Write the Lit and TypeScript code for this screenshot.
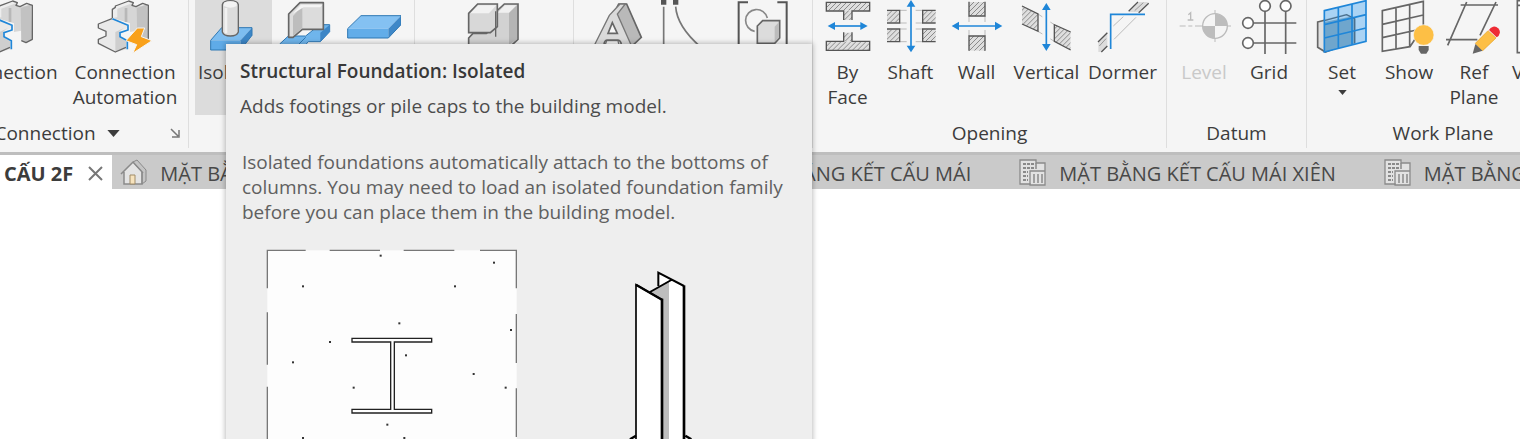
import { LitElement, html, svg, css, nothing } from "lit";
import type { SVGTemplateResult, TemplateResult } from "lit";
import { customElement, property } from "lit/decorators.js";
import { classMap } from "lit/directives/class-map.js";
import { styleMap } from "lit/directives/style-map.js";

/* ---------- icon artwork, each drawn on a 168-unit square ---------- */

const beamJoint = svg`
  <path d="M337 54V28L346 22V18L388 3L400 8V18L410 20L445 12V118L428 128L412 122V92L390 96V70Z" fill="#d6d6d6"/>
  <path d="M346 18L388 3L400 8L352 26V52L337 54V28Z" fill="#ededed"/>
  <path d="M410 24L440 14L445 118L428 128L412 122Z" fill="#c2c2c2"/>
  <path d="M378 24V66" stroke="#b8b8b8" stroke-width="8"/>
  <path d="M337 54V28L346 22V18L386 3L400 8L396 16L408 20L428 10L445 16V118L426 128L412 122" fill="none" stroke="#666" stroke-width="4" stroke-linejoin="round"/>
  <path d="M295 72L340 54L384 76V84L362 92L360 110L384 122V148L346 156L295 130V116L318 106V92L295 84Z" fill="#e9e9e9"/>
  <path d="M346 96V156L378 142V124L358 112V94L372 84Z" fill="#cfcfcf"/>
  <path d="M336 56L295 72V84L318 94V108L295 118V130L346 156L378 142" fill="none" stroke="#666" stroke-width="4" stroke-linejoin="round"/>
  <path d="M337 56L384 76V90L360 98V110L382 122V148" fill="none" stroke="#1f86d8" stroke-width="5"/>`;

const hatch = (x: number, y: number, w: number, h: number): SVGTemplateResult => {
  const id = `h${x}-${y}`;
  const lines: SVGTemplateResult[] = [];
  for (let i = -h; i < w; i += 15) {
    lines.push(svg`<path d=${`M${x + i} ${y + h}l${h} ${-h}`} stroke="#8a8a8a" stroke-width="3"/>`);
  }
  return svg`
    <clipPath id=${id}><rect x=${x} y=${y} width=${w} height=${h}/></clipPath>
    <rect x=${x} y=${y} width=${w} height=${h} fill="#dedede"/>
    <g clip-path=${`url(#${id})`}>${lines}</g>`;
};

const icons: Record<string, { box: string; art: SVGTemplateResult }> = {
  connection: { box: "285 0 168 168", art: beamJoint },
  automation: {
    box: "291 0 168 168",
    art: svg`${beamJoint}
      <path d="M412 84H434L424 110L456 122L398 160L410 134L378 122Z" fill="#f9a11b" stroke="#f5f5f5" stroke-width="3"/>`,
  },
  isolated: {
    box: "43 0 168 168",
    art: svg`
      <path d="M60 121L93 83H184L150 121Z" fill="#7dbdf0"/>
      <path d="M60 121H150V150H60Z" fill="#5fabe8"/>
      <path d="M150 121L184 83V106L150 150Z" fill="#3d86c6"/>
      <path d="M60 121L93 83H184V106L150 150H60Z" fill="none" stroke="#2f78b4" stroke-width="3"/>
      <path d="M95 14Q97 2 119 2Q141 2 143 14V96Q139 108 119 108Q99 108 95 96Z" fill="#dcdcdc" stroke="#666" stroke-width="4"/>
      <path d="M100 18Q119 28 138 18V8Q119 0 100 8Z" fill="#f3f3f3"/>
      <path d="M106 24V100" stroke="#f1f1f1" stroke-width="8"/>`,
  },
  wallFooting: {
    box: "258 0 168 168",
    art: svg`
      <path d="M266 132L292 108H344L386 74H416V95L388 125H352L330 150H266Z" fill="#6fb5ec" stroke="#2f78b4" stroke-width="3"/>
      <path d="M388 98L416 74V95L388 125Z" fill="#3d86c6"/>
      <path d="M266 134H322L344 112" fill="none" stroke="#2f78b4" stroke-width="3"/>
      <path d="M293 42L327 8H397V88H334L306 112H293Z" fill="#dcdcdc" stroke="#666" stroke-width="5" stroke-linejoin="round"/>
      <path d="M306 48L334 18V84L306 108Z" fill="#bdbdbd"/>
      <path d="M304 42L330 14H394L388 22H338Z" fill="#f4f4f4"/>`,
  },
  slab: {
    box: "462 0 168 168",
    art: svg`
      <path d="M470 86L510 47H630L592 86Z" fill="#84c1f2"/>
      <path d="M470 86H592V114H470Z" fill="#62ade9"/>
      <path d="M592 86L630 47V74L592 114Z" fill="#3f88c8"/>
      <path d="M470 86L510 47H630V74L592 114H470Z" fill="none" stroke="#2f78b4" stroke-width="3"/>`,
  },
  component: {
    box: "103 0 168 168",
    art: svg`
      <path d="M111 160V114L124 100H164L192 76V36L218 12H259V118L242 134V160Z" fill="#d2d2d2" stroke="#666" stroke-width="5"/>
      <path d="M232 38L256 16V118L232 134Z" fill="#b5b5b5"/>
      <path d="M198 38L220 16H254L232 38Z" fill="#f0f0f0"/>
      <path d="M111 40L138 12H197V80L176 98H111Z" fill="#d8d8d8" stroke="#666" stroke-width="5"/>
      <path d="M116 40L140 16H194L172 40Z" fill="#f2f2f2"/>
      <path d="M192 34V110" stroke="#666" stroke-width="4"/>`,
  },
  modelText: {
    box: "478 0 168 168",
    art: svg`
      <path d="M570 12H594L638 112L606 142L556 40Z" fill="#b9b9b9" stroke="#666" stroke-width="5"/>
      <path d="M490 150L542 46L574 12H590L566 42L614 150H574L568 122H534L524 150Z" fill="#dadada" stroke="#777" stroke-width="4"/>
      <path d="M551 68L566 100H538Z" fill="#f7f7f7" stroke="#666" stroke-width="5"/>
      <path d="M526 132Q528 120 536 120H568Q576 122 578 132" fill="none" stroke="#666" stroke-width="5"/>`,
  },
  modelLine: {
    box: "672 0 168 168",
    art: svg`
      <path d="M690 0h16v14h-16zM726 0h16v14h-16z" fill="#555"/>
      <path d="M698 20V160M734 20Q738 80 810 142" fill="none" stroke="#777" stroke-width="5"/>`,
  },
  modelGroup: {
    box: "906 0 168 168",
    art: svg`
      <path d="M954 7H926V160M1042 7H1070V160" fill="none" stroke="#555" stroke-width="6"/>
      <path d="M974 94A33 33 0 1 1 1012 54" fill="none" stroke="#888" stroke-width="5"/>
      <path d="M982 78L998 62H1049V114L1034 130H982Z" fill="#dcdcdc" stroke="#666" stroke-width="5"/>
      <path d="M1034 80L1047 66V112L1034 126Z" fill="#bcbcbc"/>`,
  },
  byFace: {
    box: "30 0 168 168",
    art: svg`
      ${hatch(49, 8, 129, 24)}${hatch(101, 32, 25, 28)}${hatch(49, 124, 129, 26)}${hatch(101, 98, 25, 26)}
      <path d="M101 60V33H49V7H179V33H126V60M101 97V124H49V151H179V124H126V97" fill="none" stroke="#555" stroke-width="4"/>
      <path d="M66 78H160" stroke="#1f86d8" stroke-width="5"/>
      <path d="M53 78l22-12v24zM173 78l-22-12v24z" fill="#1f86d8"/>`,
  },
  shaft: {
    box: "219 0 168 168",
    art: svg`
      ${hatch(231, 32, 38, 36)}${hatch(338, 32, 39, 36)}${hatch(231, 88, 38, 36)}${hatch(338, 88, 39, 36)}
      <path d="M270 31H338M270 69H338M270 87H338M270 125H338" stroke="#bbb" stroke-width="3"/>
      <path d="M231 31H269V69H231M377 31H338V69H377M231 87H269V125H231M377 87H338V125H377" fill="none" stroke="#555" stroke-width="4"/>
      <path d="M290 20h27v116h-27z" fill="#f5f5f5"/>
      <path d="M303 14V142" stroke="#1f86d8" stroke-width="5"/>
      <path d="M303 0l-13 20h26zM303 157l-13-20h26z" fill="#1f86d8"/>`,
  },
  wall: {
    box: "420 0 168 168",
    art: svg`
      ${hatch(480, 6, 48, 42)}${hatch(480, 108, 48, 44)}
      <path d="M480 48V108M528 48V108" stroke="#bbb" stroke-width="3"/>
      <path d="M480 5V48H528V5M480 152V108H528V152" fill="none" stroke="#555" stroke-width="4"/>
      <path d="M445 66h118v24h-118z" fill="#f5f5f5"/>
      <path d="M442 78H566" stroke="#1f86d8" stroke-width="5"/>
      <path d="M428 78l22-13v26zM580 78l-22-13v26z" fill="#1f86d8"/>`,
  },
  vertical: {
    box: "627 0 168 168",
    art: svg`
      <clipPath id="v1"><path d="M636 18L684 42V94L636 72Z"/></clipPath>
      <clipPath id="v2"><path d="M733 74L782 96V150L733 124Z"/></clipPath>
      <g clip-path="url(#v1)">${hatch(636, 16, 50, 80)}</g>
      <g clip-path="url(#v2)">${hatch(733, 72, 50, 80)}</g>
      <path d="M684 42L733 74M684 94L733 124" stroke="#bbb" stroke-width="3"/>
      <path d="M636 18L684 42V94L636 72M782 96L733 74V124L782 150" fill="none" stroke="#555" stroke-width="4"/>
      <path d="M697 30h24v100h-24z" fill="#f5f5f5"/>
      <path d="M709 24V138" stroke="#1f86d8" stroke-width="5"/>
      <path d="M709 9l-13 21h26zM709 153l-13-21h26z" fill="#1f86d8"/>`,
  },
  dormer: {
    box: "855 0 168 168",
    art: svg`
      <path d="M958 36L988 6H1015L985 36ZM865 126L892 98V138L873 156H865Z" fill="#dcdcdc"/>
      <path d="M910 78L940 50M912 118L978 52" stroke="#bbb" stroke-width="3"/>
      <path d="M956 34L984 6M986 38L1016 10M864 126L892 98M874 156L892 138" stroke="#555" stroke-width="4"/>
      <path d="M974 32L1000 8M868 138L888 116" stroke="#999" stroke-width="3"/>
      <path d="M902 147V43H1005" fill="none" stroke="#1f86d8" stroke-width="5"/>`,
  },
  level: {
    box: "75 0 168 168",
    art: svg`
      <path d="M86 78H104M112 78H124M132 78H240M192 30V126" stroke="#bbb" stroke-width="3"/>
      <path d="M112 44L119 38V60M110 60H127" fill="none" stroke="#bbb" stroke-width="4"/>
      <circle cx="192" cy="78" r="37" fill="#f5f5f5" stroke="#bbb" stroke-width="4"/>
      <path d="M192 78V41A37 37 0 0 1 229 78ZM192 78V115A37 37 0 0 1 155 78Z" fill="#bdbdbd"/>`,
  },
  grid: {
    box: "270 0 168 168",
    art: svg`
      <path d="M342 34V162M404 34V162M308 69H436M308 129H436" stroke="#666" stroke-width="5"/>
      <g fill="#fff" stroke="#666" stroke-width="5">
        <circle cx="342" cy="18" r="16"/><circle cx="404" cy="18" r="16"/>
        <circle cx="291" cy="69" r="16"/><circle cx="291" cy="129" r="16"/>
      </g>`,
  },
  set: {
    box: "492 0 168 168",
    art: svg`
      <path d="M503 66L588 44L602 52V128L526 156L503 142Z" fill="#e0e0e0" stroke="#666" stroke-width="5"/>
      <path d="M523 32L648 2V124L523 156Z" fill="#9ccdf3" fill-opacity=".85"/>
      <path d="M523 66L600 50L616 58V131L523 155Z" fill="#6fa6cd"/>
      <path d="M523 62L590 44L614 56V130" fill="none" stroke="#4b6f8c" stroke-width="4"/>
      <path d="M523 32L648 2V124L523 156ZM565 22V146M606 12V135M523 74L648 44M523 114L648 84" fill="none" stroke="#1f86d8" stroke-width="5"/>`,
  },
  show: {
    box: "693 0 168 168",
    art: svg`
      <path d="M697 32L820 4V80L780 140L697 154ZM738 22V146M779 12V138M697 73L820 45M697 113L800 90" fill="none" stroke="#666" stroke-width="5"/>
      <path d="M800 126h44v20l-8 18h-26l-8-18z" fill="#f5f5f5"/>
      <circle cx="821" cy="105" r="31" fill="#fdbf45" stroke="#f5f5f5" stroke-width="2"/>
      <path d="M806 138H836V150L829 161H813L806 150Z" fill="#666"/>`,
  },
  refPlane: {
    box: "888 0 168 168",
    art: svg`
      <path d="M932 15H1044M888 119H982M950 6L893 136M1038 6L990 106" fill="none" stroke="#666" stroke-width="5"/>
      <path d="M968 161L976 132L998 152Z" fill="#666"/>
      <path d="M976 130L1014 92L1038 114L998 152Z" fill="#fdbf45" stroke="#e6a020" stroke-width="2"/>
      <path d="M1017 90A17 17 0 1 1 1040 112Z" fill="#ee2b35"/>`,
  },
  viewer: {
    box: "1082 0 168 168",
    art: svg`<path d="M1092 2H1230V158H1092Z" fill="#fff" stroke="#666" stroke-width="5"/><path d="M1092 16H1230" stroke="#666" stroke-width="5"/>`,
  },
};

interface Tool {
  name: string;
  label?: string[];
  icon: string;
  width: number;
  state?: "hover" | "disabled";
  menu?: boolean;
}

interface Panel {
  name: string;
  titled?: boolean;
  width: number;
  tools: Tool[];
  menu?: boolean;
}

const panels: Panel[] = [
  {
    name: "Connection", titled: true, width: 263, menu: true,
    tools: [
      { name: "Connection", label: ["Connection"], icon: "connection", width: 110 },
      { name: "Connection Automation", label: ["Connection", "Automation"], icon: "automation", width: 126 },
    ],
  },
  {
    name: "Foundation", width: 226,
    tools: [
      { name: "Isolated", label: ["Isolated"], icon: "isolated", width: 77, state: "hover" },
      { name: "Wall", icon: "wallFooting", width: 66 },
      { name: "Slab", icon: "slab", width: 71 },
    ],
  },
  { name: "Build", width: 159, tools: [{ name: "Component", icon: "component", width: 120 }] },
  {
    name: "Model", width: 239,
    tools: [
      { name: "Model Text", icon: "modelText", width: 66 },
      { name: "Model Line", icon: "modelLine", width: 68 },
      { name: "Model Group", icon: "modelGroup", width: 86 },
    ],
  },
  {
    name: "Opening", titled: true, width: 354,
    tools: [
      { name: "By Face", label: ["By", "Face"], icon: "byFace", width: 60 },
      { name: "Shaft", label: ["Shaft"], icon: "shaft", width: 66 },
      { name: "Wall", label: ["Wall"], icon: "wall", width: 66 },
      { name: "Vertical", label: ["Vertical"], icon: "vertical", width: 74 },
      { name: "Dormer", label: ["Dormer"], icon: "dormer", width: 78 },
    ],
  },
  {
    name: "Datum", titled: true, width: 140,
    tools: [
      { name: "Level", label: ["Level"], icon: "level", width: 65, state: "disabled" },
      { name: "Grid", label: ["Grid"], icon: "grid", width: 65 },
    ],
  },
  {
    name: "Work Plane", titled: true, width: 273,
    tools: [
      { name: "Set", label: ["Set"], icon: "set", width: 68, menu: true },
      { name: "Show", label: ["Show"], icon: "show", width: 66 },
      { name: "Ref Plane", label: ["Ref", "Plane"], icon: "refPlane", width: 64 },
      { name: "Viewer", label: ["Viewer"], icon: "viewer", width: 72 },
    ],
  },
];

@customElement("ribbon-tool")
class RibbonTool extends LitElement {
  @property({ attribute: false }) tool!: Tool;

  static styles = css`
    :host { display: block; flex: none; }
    .tool {
      display: flex; flex-direction: column; align-items: center;
      width: 100%; height: 115px; padding: 0; border: 0;
      background: none; color: #3c3c3c; font: inherit; line-height: 25px;
    }
    .hover { background: #dcdcdc; }
    .disabled { color: #c9c9c9; }
    .icon { display: block; width: 56px; height: 56px; margin-bottom: 4px; flex: none; }
    .line { display: block; white-space: nowrap; }
    .arrow { width: 9px; height: 5px; margin-top: 5px; }
  `;

  render() {
    const { name, label = [], icon, state, menu } = this.tool;
    const { box, art } = icons[icon];
    return html`
      <button class=${classMap({ tool: true, hover: state === "hover", disabled: state === "disabled" })}
        aria-label=${name} ?disabled=${state === "disabled"}>
        <svg class="icon" viewBox=${box} aria-hidden="true">${art}</svg>
        ${label.map((l) => html`<span class="line">${l}</span>`)}
        ${menu ? html`<svg class="arrow" viewBox="0 0 10 6" aria-hidden="true"><path d="M0 0H10L5 6Z" fill="#3c3c3c"/></svg>` : nothing}
      </button>`;
  }
}

@customElement("ribbon-bar")
class RibbonBar extends LitElement {
  static styles = css`
    :host { display: block; overflow: hidden; background: #f5f5f5; border-bottom: 3px solid #bebebe; }
    .panels { display: flex; height: 152px; margin-left: -74px; }
    .panel {
      flex: none; box-sizing: border-box; display: flex; flex-direction: column;
      height: 148px; border-right: 1px solid #dedede;
    }
    .tools { display: flex; justify-content: center; }
    .panel:first-child .tools { justify-content: flex-end; }
    .foot {
      flex: none; display: grid; grid-template-columns: 1fr auto 1fr; align-items: center;
      height: 36px; color: #3c3c3c;
    }
    .title {
      grid-column: 2; display: flex; align-items: center; gap: 11px;
      padding: 0; border: 0; background: none; color: inherit; font: inherit; line-height: 25px;
    }
    .caret { width: 13px; height: 7px; }
    .launcher { justify-self: end; margin-right: 8px; padding: 0; border: 0; background: none; line-height: 0; }
    .corner { width: 10px; height: 10px; }
  `;

  private foot(p: Panel): TemplateResult {
    if (!p.menu) return html`<div class="foot"><span class="title">${p.name}</span></div>`;
    return html`
      <div class="foot">
        <button class="title">${p.name}
          <svg class="caret" viewBox="0 0 14 8" aria-hidden="true"><path d="M0 0H14L7 8Z" fill="#3c3c3c"/></svg>
        </button>
        <button class="launcher" aria-label="Connection settings">
          <svg class="corner" viewBox="0 0 20 20" aria-hidden="true">
            <path d="M2 2L16 16M18 4V18H4M18 8V18H8" fill="none" stroke="#777" stroke-width="3"/>
          </svg>
        </button>
      </div>`;
  }

  render() {
    return html`
      <div class="panels">
        ${panels.map((p) => html`
          <section class="panel" aria-label=${p.name} style=${styleMap({ width: `${p.width}px` })}>
            <div class="tools">
              ${p.tools.map((t) => html`<ribbon-tool .tool=${t} style=${styleMap({ width: `${t.width}px` })}></ribbon-tool>`)}
            </div>
            ${p.titled ? this.foot(p) : nothing}
          </section>`)}
      </div>`;
  }
}

const houseIcon = svg`
  <path d="M4 13V25H22V13L13 4Z" fill="#e4e4e4"/>
  <path d="M13 3L17 1L26 11V22L22 25V13Z" fill="#c4c4c4" stroke="#8a8a8a" stroke-width="1"/>
  <path d="M1 15L13 3L23 14M4 13V25H22V13" fill="none" stroke="#8a8a8a" stroke-width="1.5"/>
  <path d="M10 16H15V25H10Z" fill="#f7e3bd" stroke="#a08c68" stroke-width="1"/>`;

const sheetIcon = svg`
  <path d="M1 1H17V4H26V26H11V25H1Z" fill="#e2e2e2" stroke="#8a8a8a" stroke-width="1.3"/>
  <path d="M11 26V12H26" fill="none" stroke="#8a8a8a" stroke-width="1.3"/>
  <path d="M4 5H15M4 9H15M4 13H9M4 17H9M4 21H9" stroke="#8a8a8a" stroke-width="2" stroke-dasharray="3 1"/>
  <path d="M15 15V24M19 15V24M23 15V24M17 4V10" stroke="#8a8a8a" stroke-width="1.5"/>`;

@customElement("view-tabs")
class ViewTabs extends LitElement {
  static styles = css`
    :host { display: block; overflow: hidden; background: #cacaca; font-size: 20px; }
    .tabs { display: flex; height: 34px; }
    .tab {
      flex: none; display: flex; align-items: center; gap: 12px;
      padding: 2px 40px 0 8px; border: 0; background: none;
      color: #484848; font: inherit; white-space: nowrap;
    }
    .active { flex: none; display: flex; align-items: center; gap: 14px; padding: 2px 8px 0 4px; background: #fff; }
    .current { padding: 0; border: 0; background: none; color: #3c3c3c; font: inherit; font-weight: 700; }
    .close { padding: 0; border: 0; background: none; line-height: 0; }
    .cross { width: 17px; height: 17px; }
    .wide { width: 583px; }
    .icon { width: 28px; height: 28px; flex: none; }
  `;

  render() {
    const tab = (name: string, art: SVGTemplateResult, wide = false) => html`
      <button class=${classMap({ tab: true, wide })}>
        <svg class="icon" viewBox="0 0 28 28" aria-hidden="true">${art}</svg>${name}
      </button>`;
    return html`
      <nav class="tabs">
        <div class="active">
          <button class="current">CẤU 2F</button>
          <button class="close" aria-label="Close view">
            <svg class="cross" viewBox="0 0 17 17" aria-hidden="true"><path d="M2 2L15 15M15 2L2 15" stroke="#777" stroke-width="2"/></svg>
          </button>
        </div>
        ${tab("MẶT BẰNG", houseIcon, true)}
        ${tab("MẶT BẰNG KẾT CẤU MÁI", sheetIcon)}
        ${tab("MẶT BẰNG KẾT CẤU MÁI XIÊN", sheetIcon)}
        ${tab("MẶT BẰNG", sheetIcon)}
      </nav>`;
  }
}

const aggregate = [
  [392, 62], [732, 83], [159, 154], [615, 154], [448, 265], [783, 285], [240, 321], [129, 382],
  [468, 361], [671, 417], [311, 458], [767, 458], [412, 569], [159, 609], [463, 609],
];

@customElement("tool-tip")
class ToolTip extends LitElement {
  static styles = css`
    :host {
      display: block; box-sizing: border-box; padding: 14px 14px 0;
      background: #eee; box-shadow: 0 0 5px 1px rgba(0, 0, 0, .25); color: #4c4c4c;
    }
    .name { margin: 0; font-size: inherit; font-weight: 600; line-height: 26px; color: #383838; }
    .summary { margin: 10px 0 0; line-height: 25px; }
    .details { margin: 31px 0 0; padding-left: 2px; line-height: 25px; color: #606060; }
    .figure { display: block; width: 100%; margin-top: 10px; }
  `;

  render() {
    return html`
      <h2 class="name">Structural Foundation: Isolated</h2>
      <p class="summary">Adds footings or pile caps to the building model.</p>
      <p class="details">
        Isolated foundations automatically attach to the bottoms of<br>
        columns. You may need to load an isolated foundation family<br>
        before you can place them in the building model.
      </p>
      <svg class="figure" viewBox="-30 0 1674 800" role="img" aria-label="Isolated footing under a steel column">
        <rect x="52" y="46" width="748" height="748" fill="#fdfdfd"/>
        <path d="M52 160V46H167M239 46H390M461 46H613M690 46H799V160M52 232V389M52 455V612M799 237V384M799 460V606"
          fill="none" stroke="#777" stroke-width="4"/>
        ${aggregate.map(([x, y]) => svg`<rect x=${x - 3} y=${y - 3} width="6" height="6" fill="#333"/>`)}
        <path d="M306 310H545V321H433V523H545V534H306V523H422V321H306Z" fill="#fff" stroke="#222" stroke-width="4"/>
        <g transform="translate(1050 45)">
          <path d="M175 68L255 108V800H175Z" fill="#fff"/>
          <path d="M150 126L210 90V800H150Z" fill="#bdbdbd"/>
          <path d="M207 92L252 108V800H207Z" fill="#fff"/>
          <path d="M175 108V68L252 108M150 126L214 90" fill="none" stroke="#000" stroke-width="6"/>
          <path d="M252 106V800" stroke="#000" stroke-width="8"/>
          <path d="M108 104L186 149V800H108Z" fill="#fff"/>
          <path d="M108 800V104L186 149" fill="none" stroke="#000" stroke-width="5"/>
          <path d="M108 104L186 149" stroke="#000" stroke-width="7"/>
          <path d="M186 146V800" stroke="#000" stroke-width="8"/>
          <path d="M108 557L90 568M256 557L274 568" stroke="#000" stroke-width="7"/>
        </g>
      </svg>`;
  }
}

@customElement("app-root")
class AppRoot extends LitElement {
  static styles = css`
    :host {
      display: block; position: relative; overflow: hidden; height: 100vh;
      background: #fff; font: 19px "Open Sans", "Noto Sans", sans-serif;
    }
    .tip { position: absolute; top: 44px; left: 226px; width: 586px; }
  `;

  render() {
    return html`
      <ribbon-bar></ribbon-bar>
      <view-tabs></view-tabs>
      <tool-tip class="tip" role="tooltip"></tool-tip>`;
  }
}
